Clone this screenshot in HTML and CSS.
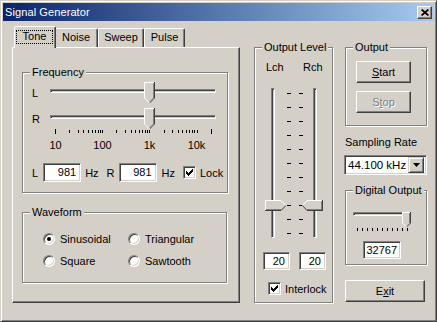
FILE: index.html
```html
<!DOCTYPE html>
<html lang="en">
<head>
    <meta charset="UTF-8">
    <meta name="viewport" content="width=device-width, initial-scale=1.0">
    <title>Signal Generator</title>
    <link rel="stylesheet" href="styles.css">
</head>
<body>
    <div class="window">
        <div class="titlebar">
            <span class="title">Signal Generator</span>
            <span class="caption-btn">
                <svg width="8" height="7" viewBox="0 0 8 7"><path d="M0.6 0.5L7.4 6.5M7.4 0.5L0.6 6.5" stroke="#000" stroke-width="1.7"/></svg>
            </span>
        </div>

        <div class="client">
            <!-- tabs -->
            <div class="tab-col">
                <div class="tabs">
                    <div class="tab tab-active tab-tone"><span class="focus">Tone</span></div>
                    <div class="tab tab-noise">Noise</div>
                    <div class="tab tab-sweep">Sweep</div>
                    <div class="tab tab-pulse">Pulse</div>
                </div>
                <div class="tab-panel">
                    <div class="group group-freq">
                        <span class="group-title">Frequency</span>
                        <div class="hrow">
                            <span class="ch">L</span>
                            <div class="hslider">
                                <div class="track"></div>
                                <svg class="thumb" style="left:94px" width="11" height="21" viewBox="0 0 11 21">
                                    <path d="M0 0H11V16L5.5 21.5L0 16Z" fill="#d4d0c8"/>
                                    <path d="M0.5 16V0.5H10" stroke="#fff" fill="none" shape-rendering="crispEdges"/>
                                    <path d="M10.5 0V16" stroke="#404040" shape-rendering="crispEdges"/>
                                    <path d="M9.5 1V16" stroke="#808080" shape-rendering="crispEdges"/>
                                    <path d="M10.5 16L5.5 21" stroke="#404040" fill="none"/>
                                    <path d="M9.5 16L5.5 20" stroke="#808080" fill="none"/>
                                    <path d="M0.5 16L5.5 21" stroke="#fff" fill="none"/>
                                </svg>
                            </div>
                        </div>
                        <div class="hrow">
                            <span class="ch">R</span>
                            <div class="hslider">
                                <div class="track"></div>
                                <svg class="thumb" style="left:94px" width="11" height="21" viewBox="0 0 11 21">
                                    <path d="M0 0H11V16L5.5 21.5L0 16Z" fill="#d4d0c8"/>
                                    <path d="M0.5 16V0.5H10" stroke="#fff" fill="none" shape-rendering="crispEdges"/>
                                    <path d="M10.5 0V16" stroke="#404040" shape-rendering="crispEdges"/>
                                    <path d="M9.5 1V16" stroke="#808080" shape-rendering="crispEdges"/>
                                    <path d="M10.5 16L5.5 21" stroke="#404040" fill="none"/>
                                    <path d="M9.5 16L5.5 20" stroke="#808080" fill="none"/>
                                    <path d="M0.5 16L5.5 21" stroke="#fff" fill="none"/>
                                </svg>
                            </div>
                        </div>
                        <svg class="hticks" width="166" height="6" viewBox="0 0 166 6">
                            <path stroke="#000" shape-rendering="crispEdges" d="M5.5 0v5 M19.5 1v3 M28.5 1v3 M33.5 1v3 M38.5 1v3 M42.5 1v3 M45.5 1v3 M48.5 1v3 M50.5 1v3
                                M52.5 1v3 M66.5 1v3 M75.5 1v3 M81.5 1v3 M85.5 1v3 M89.5 1v3 M92.5 1v3 M95.5 1v3 M97.5 1v3
                                M99.5 1v3 M114.5 1v3 M122.5 1v3 M128.5 1v3 M132.5 1v3 M136.5 1v3 M139.5 1v3 M142.5 1v3 M144.5 1v3
                                M147.5 1v3 M161.5 0v5"/>
                        </svg>
                        <div class="scale">
                            <span>10</span><span>100</span><span>1k</span><span>10k</span>
                        </div>
                        <div class="hz-row">
                            <span>L</span>
                            <div class="edit edit-hz l-edit">981</div>
                            <span class="hz">Hz</span>
                            <span class="r-label">R</span>
                            <div class="edit edit-hz r-edit">981</div>
                            <span class="hz hz2">Hz</span>
                            <span class="checkbox lock-box">
                                <svg width="7" height="7" viewBox="0 0 7 7"><path d="M6 0h1v3h-1zM5 1h1v3h-1zM4 2h1v3h-1zM3 3h1v3h-1zM2 4h1v3h-1zM1 3h1v3h-1zM0 2h1v3h-1z" fill="#000"/></svg>
                            </span>
                            <span class="lock-label">Lock</span>
                        </div>
                    </div>

                    <div class="group group-wave">
                        <span class="group-title">Waveform</span>
                        <div class="radios">
                            <div class="opt"><span class="radio radio-on"></span>Sinusoidal</div>
                            <div class="opt"><span class="radio"></span>Triangular</div>
                            <div class="opt"><span class="radio"></span>Square</div>
                            <div class="opt"><span class="radio"></span>Sawtooth</div>
                        </div>
                    </div>
                </div>
            </div>

            <!-- output level -->
            <div class="group group-level">
                <span class="group-title">Output Level</span>
                <div class="level-grid">
                    <span class="lch">Lch</span>
                    <span class="rch">Rch</span>

                    <div class="vslider vs-left">
                        <div class="vtrack"></div>
                        <div class="vticks"></div>
                        <svg class="vthumb" style="top:112px;left:0" width="21" height="11" viewBox="0 0 21 11">
                            <path d="M0 0H16L21 5.5L16 11H0Z" fill="#d4d0c8"/>
                            <path d="M0.5 10.5V0.5H16" stroke="#fff" fill="none" shape-rendering="crispEdges"/>
                            <path d="M16 0.5L20.5 5" stroke="#fff" fill="none"/>
                            <path d="M0 10.5H16" stroke="#404040" shape-rendering="crispEdges"/>
                            <path d="M1 9.5H16" stroke="#808080" shape-rendering="crispEdges"/>
                            <path d="M16 10.5L21 5.5" stroke="#404040" fill="none"/>
                        </svg>
                    </div>
                    <div class="vslider vs-right">
                        <div class="vticks"></div>
                        <div class="vtrack"></div>
                        <svg class="vthumb" style="top:112px;left:4px" width="21" height="11" viewBox="0 0 21 11">
                            <path d="M5 0H21V11H5L0 5.5Z" fill="#d4d0c8"/>
                            <path d="M5 0.5H20.5" stroke="#fff" shape-rendering="crispEdges"/>
                            <path d="M0.5 5.5L5 1" stroke="#fff" fill="none"/>
                            <path d="M20.5 0V11" stroke="#404040" shape-rendering="crispEdges"/>
                            <path d="M19.5 1V10" stroke="#808080" shape-rendering="crispEdges"/>
                            <path d="M5 10.5H21" stroke="#404040" shape-rendering="crispEdges"/>
                            <path d="M5 9.5H20" stroke="#808080" shape-rendering="crispEdges"/>
                            <path d="M0.5 5.5L5 10.5" stroke="#404040" fill="none"/>
                        </svg>
                    </div>

                    <div class="edit edit-level">20</div>
                    <div class="edit edit-level">20</div>
                </div>
                <div class="check-row">
                    <span class="checkbox">
                        <svg width="7" height="7" viewBox="0 0 7 7"><path d="M6 0h1v3h-1zM5 1h1v3h-1zM4 2h1v3h-1zM3 3h1v3h-1zM2 4h1v3h-1zM1 3h1v3h-1zM0 2h1v3h-1z" fill="#000"/></svg>
                    </span>
                    <span>Interlock</span>
                </div>
            </div>

            <!-- right column -->
            <div class="right-col">
                <div class="group group-output">
                    <span class="group-title">Output</span>
                    <div class="btn btn-small"><u>S</u>tart</div>
                    <div class="btn btn-small btn-disabled">S<u>t</u>op</div>
                </div>

                <div class="rate-label">Sampling Rate</div>
                <div class="combo">
                    <span class="combo-text">44.100 kHz</span>
                    <span class="combo-btn">
                        <svg width="7" height="4" viewBox="0 0 7 4"><path d="M0 0H7L3.5 4Z" fill="#000"/></svg>
                    </span>
                </div>

                <div class="group group-digital">
                    <span class="group-title">Digital Output</span>
                    <div class="dslider">
                        <div class="track"></div>
                        <svg class="thumb" style="left:49px" width="9" height="15" viewBox="0 0 9 15">
                            <path d="M0 0H9V11L4.5 15.5L0 11Z" fill="#d4d0c8"/>
                            <path d="M0.5 11V0.5H8" stroke="#fff" fill="none" shape-rendering="crispEdges"/>
                            <path d="M8.5 0V11" stroke="#404040" shape-rendering="crispEdges"/>
                            <path d="M7.5 1V11" stroke="#808080" shape-rendering="crispEdges"/>
                            <path d="M8.5 11L4.5 15" stroke="#404040" fill="none"/>
                            <path d="M0.5 11L4.5 15" stroke="#fff" fill="none"/>
                        </svg>
                    </div>
                    <div class="dticks"></div>
                    <div class="edit edit-digital">32767</div>
                </div>

                <div class="btn btn-exit">E<u>x</u>it</div>
            </div>
        </div>
    </div>
</body>
</html>
```

FILE: styles.css
```css
body {
    margin: 0;
    background: #d4d0c8;
    font-family: "Liberation Sans", Arial, sans-serif;
    font-size: 11px;
    color: #000;
}

.window {
    width: 437px;
    height: 322px;
    box-sizing: border-box;
    border: 1px solid;
    border-color: #d4d0c8 #404040 #404040 #d4d0c8;
    box-shadow: inset 1px 1px #fff, inset -1px -1px #808080;
    padding: 2px;
    background: #d4d0c8;
}

.titlebar {
    height: 18px;
    display: flex;
    align-items: center;
    justify-content: space-between;
    padding: 0 2px 0 2px;
    background: linear-gradient(to right, #0a246a, #a6caf0);
}

.title {
    color: #fff;
    font-size: 11px;
    letter-spacing: 0.1px;
}

.caption-btn {
    width: 15px;
    height: 13px;
    box-sizing: border-box;
    display: flex;
    align-items: center;
    justify-content: center;
    background: #d4d0c8;
    border: 1px solid;
    border-color: #fff #404040 #404040 #fff;
    box-shadow: inset -1px -1px #808080;
}

.client {
    display: flex;
    padding: 5px 0 0 9px;
}

/* tabs */
.tab-col {
    width: 228px;
}

.tabs {
    display: flex;
    align-items: flex-end;
    height: 21px;
    padding-left: 4px;
}

.tab {
    height: 19px;
    box-sizing: border-box;
    border: 1px solid;
    border-bottom: none;
    border-color: #fff #404040 transparent #fff;
    border-radius: 2px 2px 0 0;
    box-shadow: inset -1px 0 #808080;
    text-align: center;
    line-height: 17px;
}

.tab-active {
    height: 22px;
    margin: 0 -2px -1px;
    position: relative;
    z-index: 1;
    background: #d4d0c8;
    padding: 3px 2px 0 1px;
}

.tab-tone { width: 42px; }
.tab-noise { width: 44px; }
.tab-sweep { width: 46px; }
.tab-pulse { width: 41px; }

.focus {
    display: block;
    height: 14px;
    box-sizing: border-box;
    border: 1px dotted #000;
    line-height: 11px;
}

.tab-panel {
    height: 256px;
    box-sizing: border-box;
    border: 1px solid;
    border-color: #fff #404040 #404040 #fff;
    box-shadow: inset -1px -1px #808080;
    padding: 24px 0 0 9px;
}

/* group boxes */
.group {
    position: relative;
    box-sizing: border-box;
    border: 1px solid #808080;
    box-shadow: 1px 1px #fff, inset 1px 1px #fff;
}

.group-title {
    position: absolute;
    top: -7px;
    left: 7px;
    padding: 0 2px;
    line-height: 13px;
    background: #d4d0c8;
}

.group-freq {
    width: 206px;
    height: 121px;
    padding: 9px 0 0 9px;
}

.hrow {
    display: flex;
    height: 21px;
}

.hrow + .hrow {
    margin-top: 5px;
}

.ch {
    width: 18px;
    line-height: 22px;
}

.hslider {
    position: relative;
    width: 166px;
    height: 21px;
}

.track {
    margin-top: 7px;
    height: 4px;
    box-sizing: border-box;
    border: 1px solid;
    border-color: #808080 #fff #fff #808080;
    box-shadow: inset 1px 1px #404040;
}

.thumb {
    position: absolute;
    top: 0;
}

.hticks {
    display: block;
    margin-left: 18px;
}

.scale {
    display: grid;
    grid-template-columns: repeat(4, 47px);
    margin-top: 4px;
    line-height: 13px;
    text-align: center;
}

.hz-row {
    display: flex;
    align-items: center;
    height: 19px;
    margin-top: 11px;
}

.edit {
    box-sizing: border-box;
    background: #fff;
    border: 1px solid;
    border-color: #808080 #fff #fff #808080;
    box-shadow: inset 1px 1px #404040, inset -1px -1px #d4d0c8;
    text-align: right;
}

.edit-hz {
    width: 38px;
    height: 19px;
    padding-right: 4px;
    line-height: 17px;
}

.l-edit { margin-left: 5px; }
.hz { margin-left: 4px; }
.r-label { margin-left: 8px; }
.r-edit { margin-left: 4px; }
.hz2 { margin-left: 5px; }
.lock-box { margin-left: 8px; }
.lock-label { margin-left: 4px; }

.checkbox {
    width: 13px;
    height: 13px;
    box-sizing: border-box;
    display: flex;
    align-items: center;
    justify-content: center;
    background: #fff;
    border: 1px solid;
    border-color: #808080 #fff #fff #808080;
    box-shadow: inset 1px 1px #404040, inset -1px -1px #d4d0c8;
}

.group-wave {
    width: 205px;
    height: 71px;
    margin-top: 19px;
    padding: 20px 0 0 20px;
}

.radios {
    display: grid;
    grid-template-columns: 85px 85px;
    row-gap: 10px;
}

.opt {
    display: flex;
    align-items: center;
    gap: 5px;
    height: 12px;
}

.radio {
    position: relative;
    width: 12px;
    height: 12px;
    box-sizing: border-box;
    border-radius: 50%;
    background: #fff;
    border: 1px solid;
    border-color: #808080 #fff #fff #808080;
    box-shadow: inset 1px 1px #404040, inset -1px -1px #d4d0c8;
}

.radio-on::after {
    content: "";
    position: absolute;
    left: 3px;
    top: 3px;
    width: 4px;
    height: 4px;
    border-radius: 50%;
    background: #000;
}

/* output level */
.group-level {
    width: 79px;
    height: 256px;
    margin: 21px 0 0 14px;
    padding: 13px 0 0 7px;
}

.level-grid {
    display: grid;
    grid-template-columns: 31px 31px;
    column-gap: 5px;
    row-gap: 14px;
}

.lch {
    padding-left: 4px;
    line-height: 13px;
}

.rch {
    padding-left: 5px;
    line-height: 13px;
}

.vslider {
    position: relative;
    display: flex;
    width: 27px;
    height: 150px;
}

.vs-left {
    margin-left: 3px;
}

.vtrack {
    width: 4px;
    height: 150px;
    box-sizing: border-box;
    border: 1px solid;
    border-color: #808080 #fff #fff #808080;
    box-shadow: inset 1px 1px #404040;
}

.vs-left .vtrack { margin-left: 6px; }
.vs-left .vticks { margin-left: 12px; }
.vs-right .vticks { margin-left: 1px; }
.vs-right .vtrack { margin-left: 10px; }

.vticks {
    width: 4px;
    height: 141px;
    margin-top: 5px;
    background: repeating-linear-gradient(to bottom, #000 0 1px, transparent 1px 14px);
}

.vthumb {
    position: absolute;
}

.edit-level {
    width: 27px;
    height: 18px;
    margin-left: 1px;
    padding-right: 4px;
    line-height: 16px;
}

.check-row {
    display: flex;
    align-items: center;
    gap: 4px;
    height: 13px;
    margin: 12px 0 0 6px;
}

/* right column */
.right-col {
    display: flex;
    flex-direction: column;
    width: 82px;
    margin: 21px 0 0 12px;
}

.group-output {
    width: 82px;
    height: 79px;
    padding: 13px 0 0 10px;
}

.btn {
    box-sizing: border-box;
    background: #d4d0c8;
    border: 1px solid;
    border-color: #fff #404040 #404040 #fff;
    box-shadow: inset -1px -1px #808080;
    text-align: center;
}

.btn-small {
    width: 55px;
    height: 22px;
    line-height: 20px;
}

.btn-small + .btn-small {
    margin-top: 8px;
}

.btn-disabled {
    color: #808080;
    text-shadow: 1px 1px #fff;
}

.rate-label {
    margin-top: 10px;
    line-height: 13px;
}

.combo {
    display: flex;
    align-items: center;
    justify-content: space-between;
    width: 83px;
    height: 20px;
    box-sizing: border-box;
    margin: 6px 0 0 -1px;
    padding: 2px;
    background: #fff;
    border: 1px solid;
    border-color: #808080 #fff #fff #808080;
    box-shadow: inset 1px 1px #404040, inset -1px -1px #d4d0c8;
}

.combo-text {
    padding-left: 1px;
    font-size: 11.5px;
}

.combo-btn {
    width: 16px;
    height: 16px;
    box-sizing: border-box;
    display: flex;
    align-items: center;
    justify-content: center;
    background: #d4d0c8;
    border: 1px solid;
    border-color: #d4d0c8 #404040 #404040 #d4d0c8;
    box-shadow: inset 1px 1px #fff, inset -1px -1px #808080;
}

.group-digital {
    width: 82px;
    height: 75px;
    margin-top: 15px;
    padding: 17px 0 0 7px;
}

.dslider {
    position: relative;
    width: 58px;
    height: 15px;
}

.dslider .track {
    margin-top: 4px;
}

.dticks {
    width: 51px;
    height: 3px;
    margin: 1px 0 0 4px;
    background: repeating-linear-gradient(to right, #000 0 1px, transparent 1px 5px);
}

.edit-digital {
    width: 38px;
    height: 18px;
    margin: 10px 0 0 10px;
    padding-right: 3px;
    line-height: 16px;
}

.btn-exit {
    width: 80px;
    height: 22px;
    margin-top: 15px;
    line-height: 20px;
}
```
